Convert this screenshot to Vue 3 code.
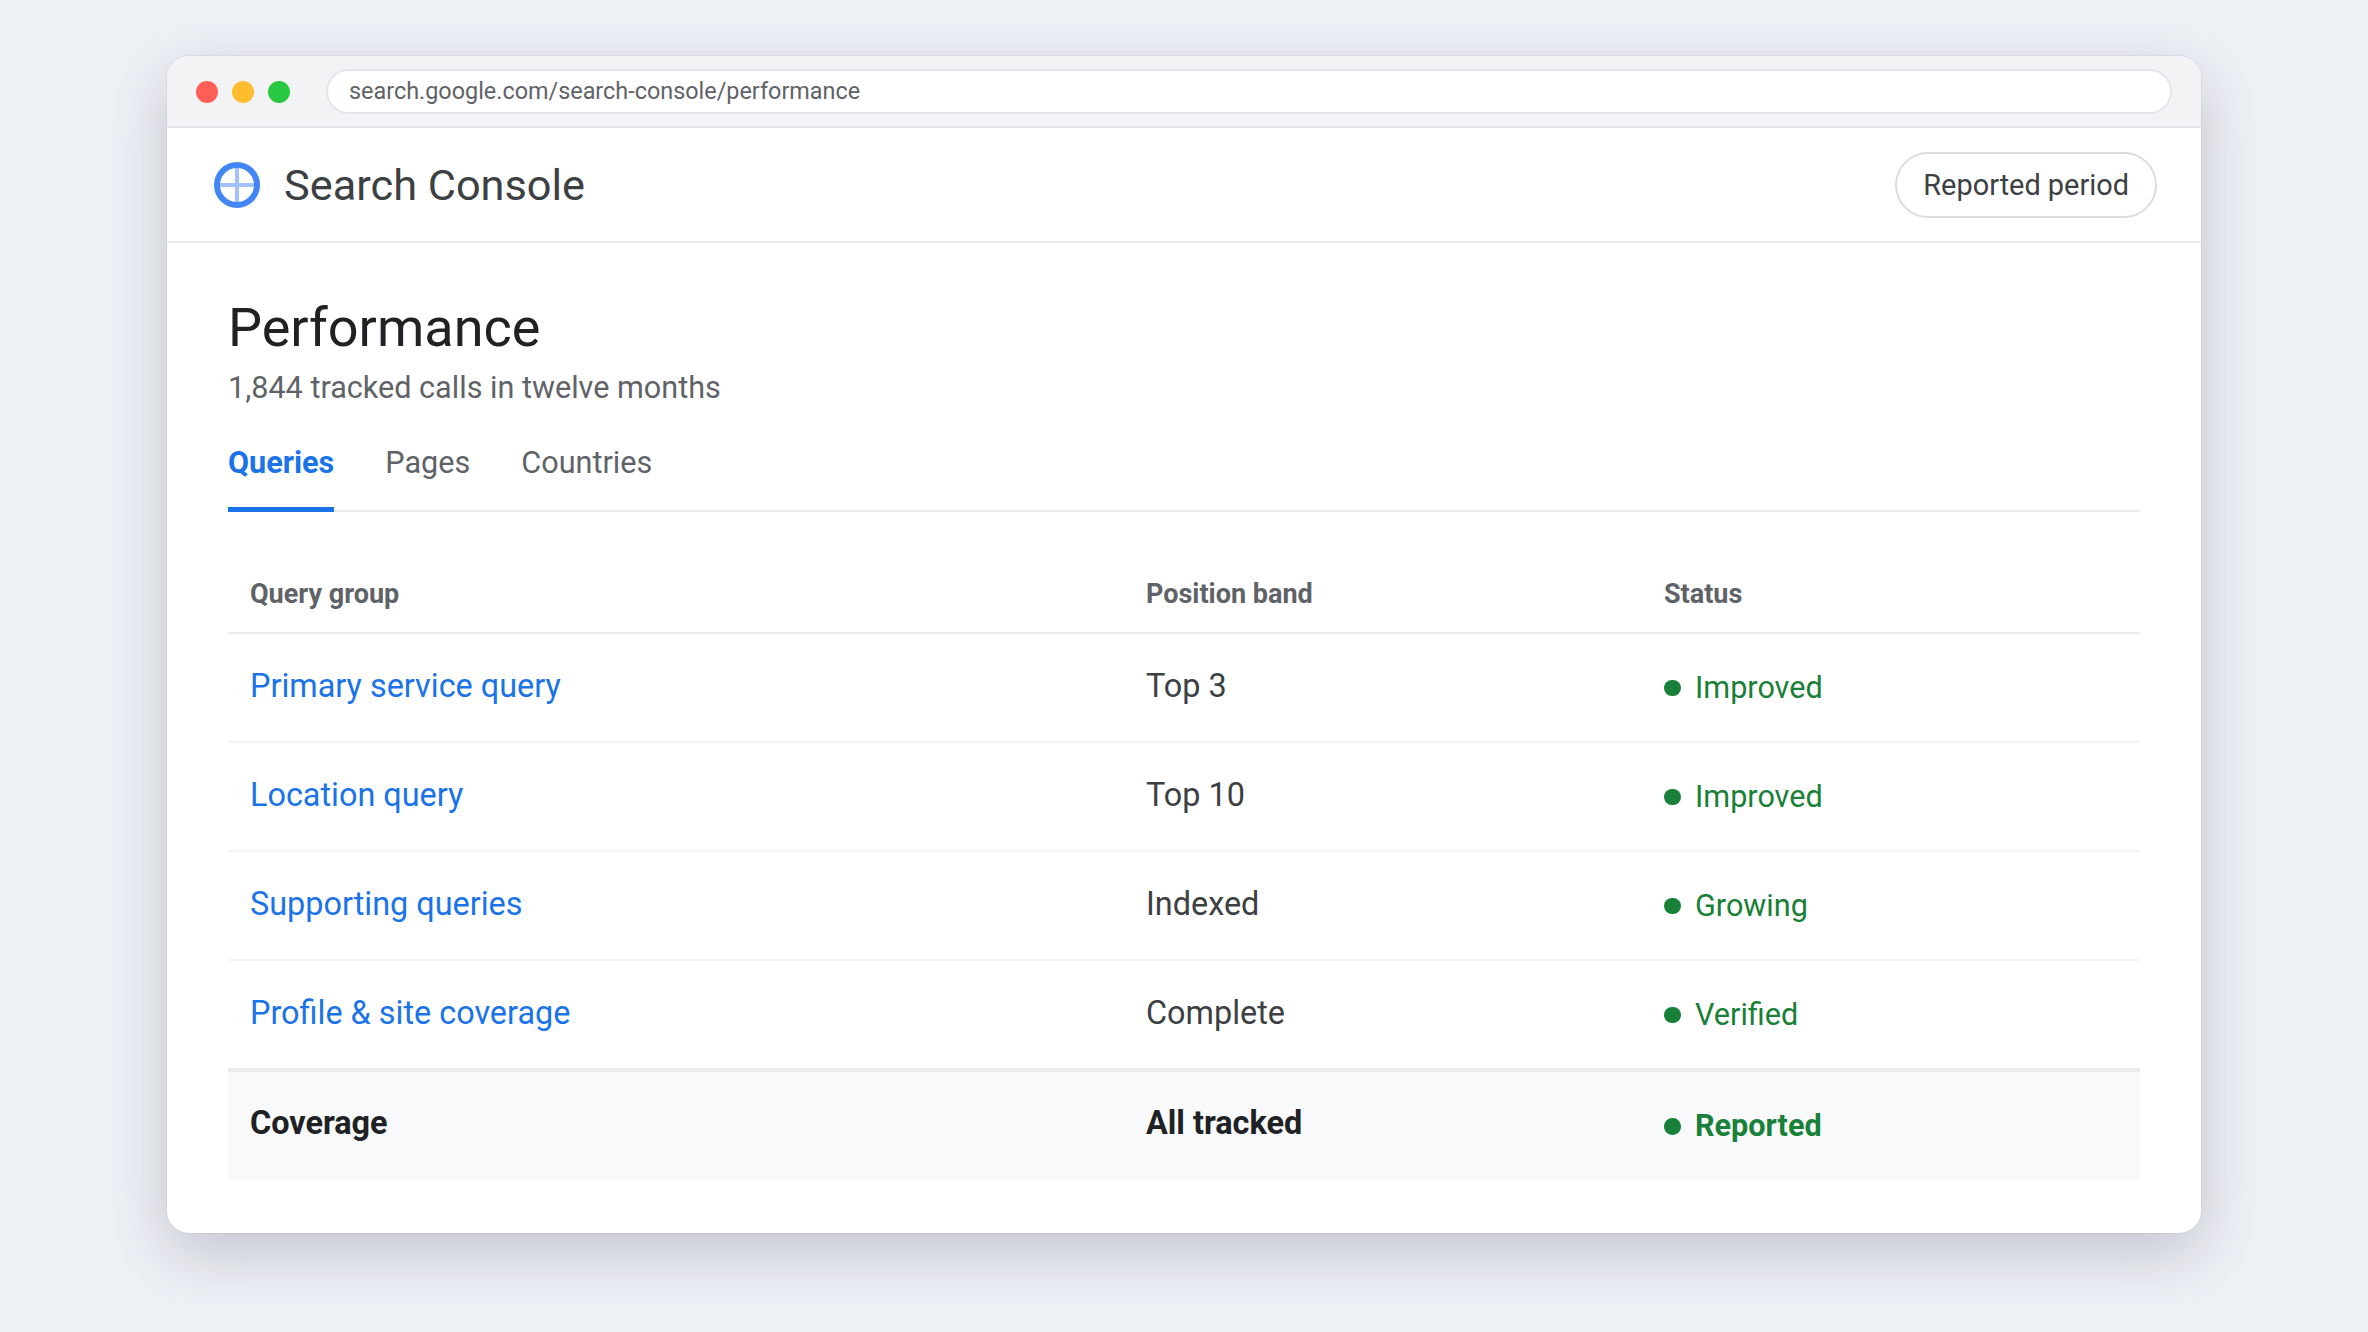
<script setup>
const tabs = [
  { label: 'Queries', active: true },
  { label: 'Pages', active: false },
  { label: 'Countries', active: false },
]
const rows = [
  { name: 'Primary service query', band: 'Top 3', status: 'Improved' },
  { name: 'Location query', band: 'Top 10', status: 'Improved' },
  { name: 'Supporting queries', band: 'Indexed', status: 'Growing' },
  { name: 'Profile & site coverage', band: 'Complete', status: 'Verified' },
]
</script>

<template>
  <div class="page">
    <div class="window">
      <div class="chrome">
        <div class="lights">
          <span class="light red"></span>
          <span class="light amber"></span>
          <span class="light green"></span>
        </div>
        <div class="address">search.google.com/search-console/performance</div>
      </div>
      <header class="topbar">
        <div class="brand">
          <svg class="logo" viewBox="0 0 46 46" aria-hidden="true">
            <path d="M23 3V43M3 23H43" stroke="#a1c2fa" stroke-width="4" fill="none" />
            <circle cx="23" cy="23" r="20" stroke="#4285f4" stroke-width="6" fill="none" />
          </svg>
          <span class="brand-name">Search Console</span>
        </div>
        <button class="period" type="button">Reported period</button>
      </header>
      <main class="content">
        <h1 class="title">Performance</h1>
        <p class="subtitle">1,844 tracked calls in twelve months</p>
        <nav class="tabs">
          <span v-for="tab in tabs" :key="tab.label" class="tab" :class="{ active: tab.active }">{{ tab.label }}</span>
        </nav>
        <div class="table">
          <div class="row head">
            <div>Query group</div>
            <div>Position band</div>
            <div>Status</div>
          </div>
          <div v-for="row in rows" :key="row.name" class="row body">
            <div class="link">{{ row.name }}</div>
            <div class="band">{{ row.band }}</div>
            <div class="status"><span class="dot"></span>{{ row.status }}</div>
          </div>
          <div class="row total">
            <div class="total-cell">Coverage</div>
            <div class="total-cell">All tracked</div>
            <div class="status"><span class="dot"></span>Reported</div>
          </div>
        </div>
      </main>
    </div>
  </div>
</template>

<style>
html, body { margin: 0; background: #eef1f6; }
</style>

<style scoped>
.page {
  width: 2368px;
  height: 1332px;
  box-sizing: border-box;
  padding: 56px 167px 0;
  background: #eef1f6;
  font-family: Roboto, sans-serif;
  overflow: hidden;
}
.window {
  height: 1177px;
  border-radius: 22px;
  background: #fff;
  overflow: hidden;
  box-shadow: 0 20px 64px rgba(60, 64, 80, 0.26), 0 0 0 1px rgba(60, 64, 80, 0.06);
}
.chrome {
  height: 72px;
  box-sizing: border-box;
  display: flex;
  align-items: center;
  padding: 0 29px;
  background: #f1f3f5;
  border-bottom: 2px solid #e3e6ea;
}
.lights { display: flex; gap: 14px; margin: 1px 36px 0 0; }
.light { width: 22px; height: 22px; border-radius: 50%; }
.red { background: #ff5f57; }
.amber { background: #febc2e; }
.green { background: #28c840; }
.address {
  flex: 1;
  height: 45px;
  margin-top: 1px;
  box-sizing: border-box;
  display: flex;
  align-items: center;
  padding: 0 21px 2px;
  background: #fff;
  border: 2px solid #e3e6ea;
  border-radius: 23px;
  color: #5f6368;
  font-size: 23.4px;
}
.topbar {
  height: 115px;
  box-sizing: border-box;
  display: flex;
  align-items: center;
  justify-content: space-between;
  padding: 0 44px 0 47px;
  border-bottom: 2px solid #e8eaed;
}
.brand { display: flex; align-items: center; gap: 24px; }
.logo { width: 46px; height: 46px; display: block; }
.brand-name { padding-top: 1px; font-size: 43.3px; color: #3c4043; }
.period {
  height: 66px;
  padding: 0 26px;
  background: #fff;
  border: 2px solid #dadce0;
  border-radius: 33px;
  color: #3c4043;
  font-family: inherit;
  font-size: 28.9px;
}
.content { padding: 52px 61px 0; }
.title {
  margin: 0;
  font-size: 54px;
  line-height: 66px;
  font-weight: 400;
  color: #202124;
}
.subtitle {
  margin: 7px 0 0;
  font-size: 30.6px;
  line-height: 40px;
  color: #5f6368;
}
.tabs {
  display: flex;
  gap: 51px;
  margin-top: 24px;
  border-bottom: 2px solid #e8eaed;
}
.tab {
  padding: 10.5px 0 24.5px;
  margin-bottom: -2px;
  font-size: 30.6px;
  line-height: 40px;
  color: #5f6368;
  border-bottom: 5px solid transparent;
}
.tab.active {
  color: #1a73e8;
  font-weight: 700;
  border-bottom-color: #1a73e8;
}
.table { margin-top: 65.5px; }
.row {
  display: grid;
  grid-template-columns: 896px 518px 1fr;
  align-items: center;
  box-sizing: border-box;
}
.row > div { padding: 0 22px; }
.head {
  height: 56px;
  border-bottom: 2px solid #e8eaed;
  font-size: 27px;
  font-weight: 700;
  color: #5f6368;
  align-items: start;
}
.body {
  height: 109px;
  border-bottom: 2px solid #f1f3f4;
  font-size: 32.4px;
}
.body:nth-last-child(2) { height: 107px; border-bottom: 0; }
.row > .link { padding-bottom: 2px; color: #1a73e8; }
.row > .band { padding-bottom: 2px; color: #3c4043; }
.row > .status {
  display: flex;
  align-items: center;
  gap: 14.5px;
  padding-top: 1px;
  color: #188038;
  font-size: 30.6px;
}
.dot {
  width: 16.5px;
  height: 16.5px;
  margin-top: 1px;
  border-radius: 50%;
  background: #188038;
  flex: none;
}
.total {
  height: 111.5px;
  background: #f8f9fa;
  border-top: 4px solid #e8eaed;
  font-size: 32.4px;
  font-weight: 700;
  color: #202124;
}
.row > .total-cell { padding-bottom: 4px; }
</style>
